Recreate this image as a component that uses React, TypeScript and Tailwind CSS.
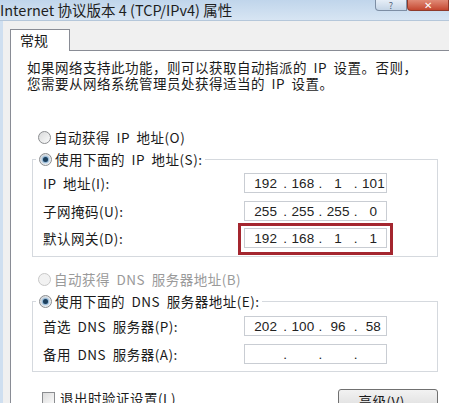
import type { ReactNode } from "react";

const cjk = "font-['Noto_Sans_CJK_SC','Noto_Sans',sans-serif]";
const digits = "font-['Liberation_Sans','DejaVu_Sans',sans-serif]";

function Radio({ checked, disabled }: { checked?: boolean; disabled?: boolean }) {
  return (
    <span
      className={`flex h-[13px] w-[13px] shrink-0 items-center justify-center rounded-full border ${
        disabled ? "border-[#c8c8c8] bg-[#f2f2f2]" : "border-[#8b8d90] bg-gradient-to-br from-[#d9dadb] to-[#fbfbfb]"
      }`}
    >
      {checked && <span className="h-[5px] w-[5px] rounded-full bg-[#1d3f5c] shadow-[0_0_2px_1px_#6fa3cf]" />}
    </span>
  );
}

function RadioRow({ label, checked, disabled }: { label: string; checked?: boolean; disabled?: boolean }) {
  return (
    <div className={`flex h-[16px] items-center gap-[3px] ${disabled ? "text-[#9a9a9a]" : "text-[#1a1a1a]"}`}>
      <Radio checked={checked} disabled={disabled} />
      <span className="whitespace-nowrap leading-[16px]">{label}</span>
    </div>
  );
}

function IpBox({ parts }: { parts: string[] }) {
  return (
    <div className={`grid h-[20px] w-[143px] grid-cols-4 items-center border border-[#c9cdd3] bg-white text-[13.5px] tracking-normal text-[#222] [word-spacing:0] ${digits}`}>
      {parts.map((p, i) => (
        <div key={i} className="flex items-center">
          {i > 0 && <span className="w-[10px] text-center">.</span>}
          <span className={`flex-1 text-center ${i === 0 ? "pl-[6px]" : ""}`}>{p}</span>
        </div>
      ))}
    </div>
  );
}

function FieldRow({ label, children }: { label: string; children: ReactNode }) {
  return (
    <div className="flex h-[20px] items-center pl-[10px]">
      <span className="w-[201px] whitespace-nowrap leading-[16px] text-[#1a1a1a]">{label}</span>
      {children}
    </div>
  );
}

export default function App() {
  return (
    <div className={`h-[403px] w-[449px] overflow-hidden bg-[#f0f0f0] text-[13.5px] ${cjk}`}>
      {/* title bar */}
      <div className="flex h-[21px] items-start justify-between border-b border-[#b5c7da] bg-gradient-to-b from-[#c0d5eb] to-[#d7e5f3]">
        <span className="pt-[1px] text-[14.5px] leading-[18px] text-[#1e1e1e] whitespace-nowrap">
          Internet 协议版本 4 (TCP/IPv4) 属性
        </span>
        <div className="flex">
          <div className="flex h-[11px] w-[32px] items-center justify-center rounded-bl-[4px] border border-t-0 border-[#7d8ea4] bg-gradient-to-b from-[#e6eef7] to-[#c5d5e6] text-[9px] leading-none text-[#53637a]">
            ?
          </div>
          <div className="flex h-[11px] w-[42px] items-center justify-center rounded-bl-[4px] border border-t-0 border-[#8e3a2b] bg-gradient-to-b from-[#e08a76] to-[#c4462f] text-[10px] leading-none text-white">
            ✕
          </div>
        </div>
      </div>

      {/* body */}
      <div className="flex h-[382px] flex-col border-l-[3px] border-[#cfdff0] pl-[7px] pt-[8px]">
        <div className="relative z-10 -mb-px flex h-[24px] w-[60px] items-center border border-b-0 border-[#898c95] bg-white pl-[9px] text-[14px] text-[#1a1a1a]">
          常规
        </div>
        <div className="flex-1 border-l border-t border-[#898c95] bg-white tracking-[0.5px] [word-spacing:3px]">
          <div className="pl-[16px] pt-[8px] leading-[16px] text-[#1a1a1a]">
            <p className="whitespace-nowrap">如果网络支持此功能，则可以获取自动指派的 IP 设置。否则，</p>
            <p className="whitespace-nowrap">您需要从网络系统管理员处获得适当的 IP 设置。</p>
          </div>

          <div className="ml-[27px] mt-[38px]">
            <RadioRow label="自动获得 IP 地址(O)" />
          </div>

          <fieldset className="ml-[21px] mr-[11px] mt-[6px] border border-[#d5d9de] pb-[8px]">
            <legend className="ml-[3px] bg-white px-[3px]">
              <RadioRow label="使用下面的 IP 地址(S):" checked />
            </legend>
            <div className="mt-[6px] flex flex-col gap-[7.5px]">
              <FieldRow label="IP 地址(I):">
                <IpBox parts={["192", "168", "1", "101"]} />
              </FieldRow>
              <FieldRow label="子网掩码(U):">
                <IpBox parts={["255", "255", "255", "0"]} />
              </FieldRow>
              <FieldRow label="默认网关(D):">
                <div className="relative">
                  <IpBox parts={["192", "168", "1", "1"]} />
                  <div className="pointer-events-none absolute -bottom-[7px] -left-[6px] -right-[6px] -top-[5px] border-[3px] border-[#a4262f]" />
                </div>
              </FieldRow>
            </div>
          </fieldset>

          <div className="ml-[27px] mt-[14px]">
            <RadioRow label="自动获得 DNS 服务器地址(B)" disabled />
          </div>

          <fieldset className="ml-[21px] mr-[11px] mt-[6px] border border-[#d5d9de] pb-[7px]">
            <legend className="ml-[3px] bg-white px-[3px]">
              <RadioRow label="使用下面的 DNS 服务器地址(E):" checked />
            </legend>
            <div className="mt-[7px] flex flex-col gap-[8px]">
              <FieldRow label="首选 DNS 服务器(P):">
                <IpBox parts={["202", "100", "96", "58"]} />
              </FieldRow>
              <FieldRow label="备用 DNS 服务器(A):">
                <IpBox parts={["", "", "", ""]} />
              </FieldRow>
            </div>
          </fieldset>

          <div className="ml-[31px] mr-[11px] mt-[17px] flex items-start justify-between">
            <div className="flex items-center gap-[5px] pt-[1px]">
              <span className="h-[13px] w-[13px] border border-[#8b8d90] bg-gradient-to-br from-[#dcdcdc] to-[#fafafa]" />
              <span className="whitespace-nowrap leading-[16px] text-[#1a1a1a]">退出时验证设置(L)</span>
            </div>
            <div className="flex h-[23px] w-[100px] items-center justify-center rounded-[3px] border border-[#707070] bg-gradient-to-b from-[#f2f2f2] to-[#dcdcdc] leading-[16px] text-[#1a1a1a]">
              高级(V)...
            </div>
          </div>
        </div>
      </div>
    </div>
  );
}
